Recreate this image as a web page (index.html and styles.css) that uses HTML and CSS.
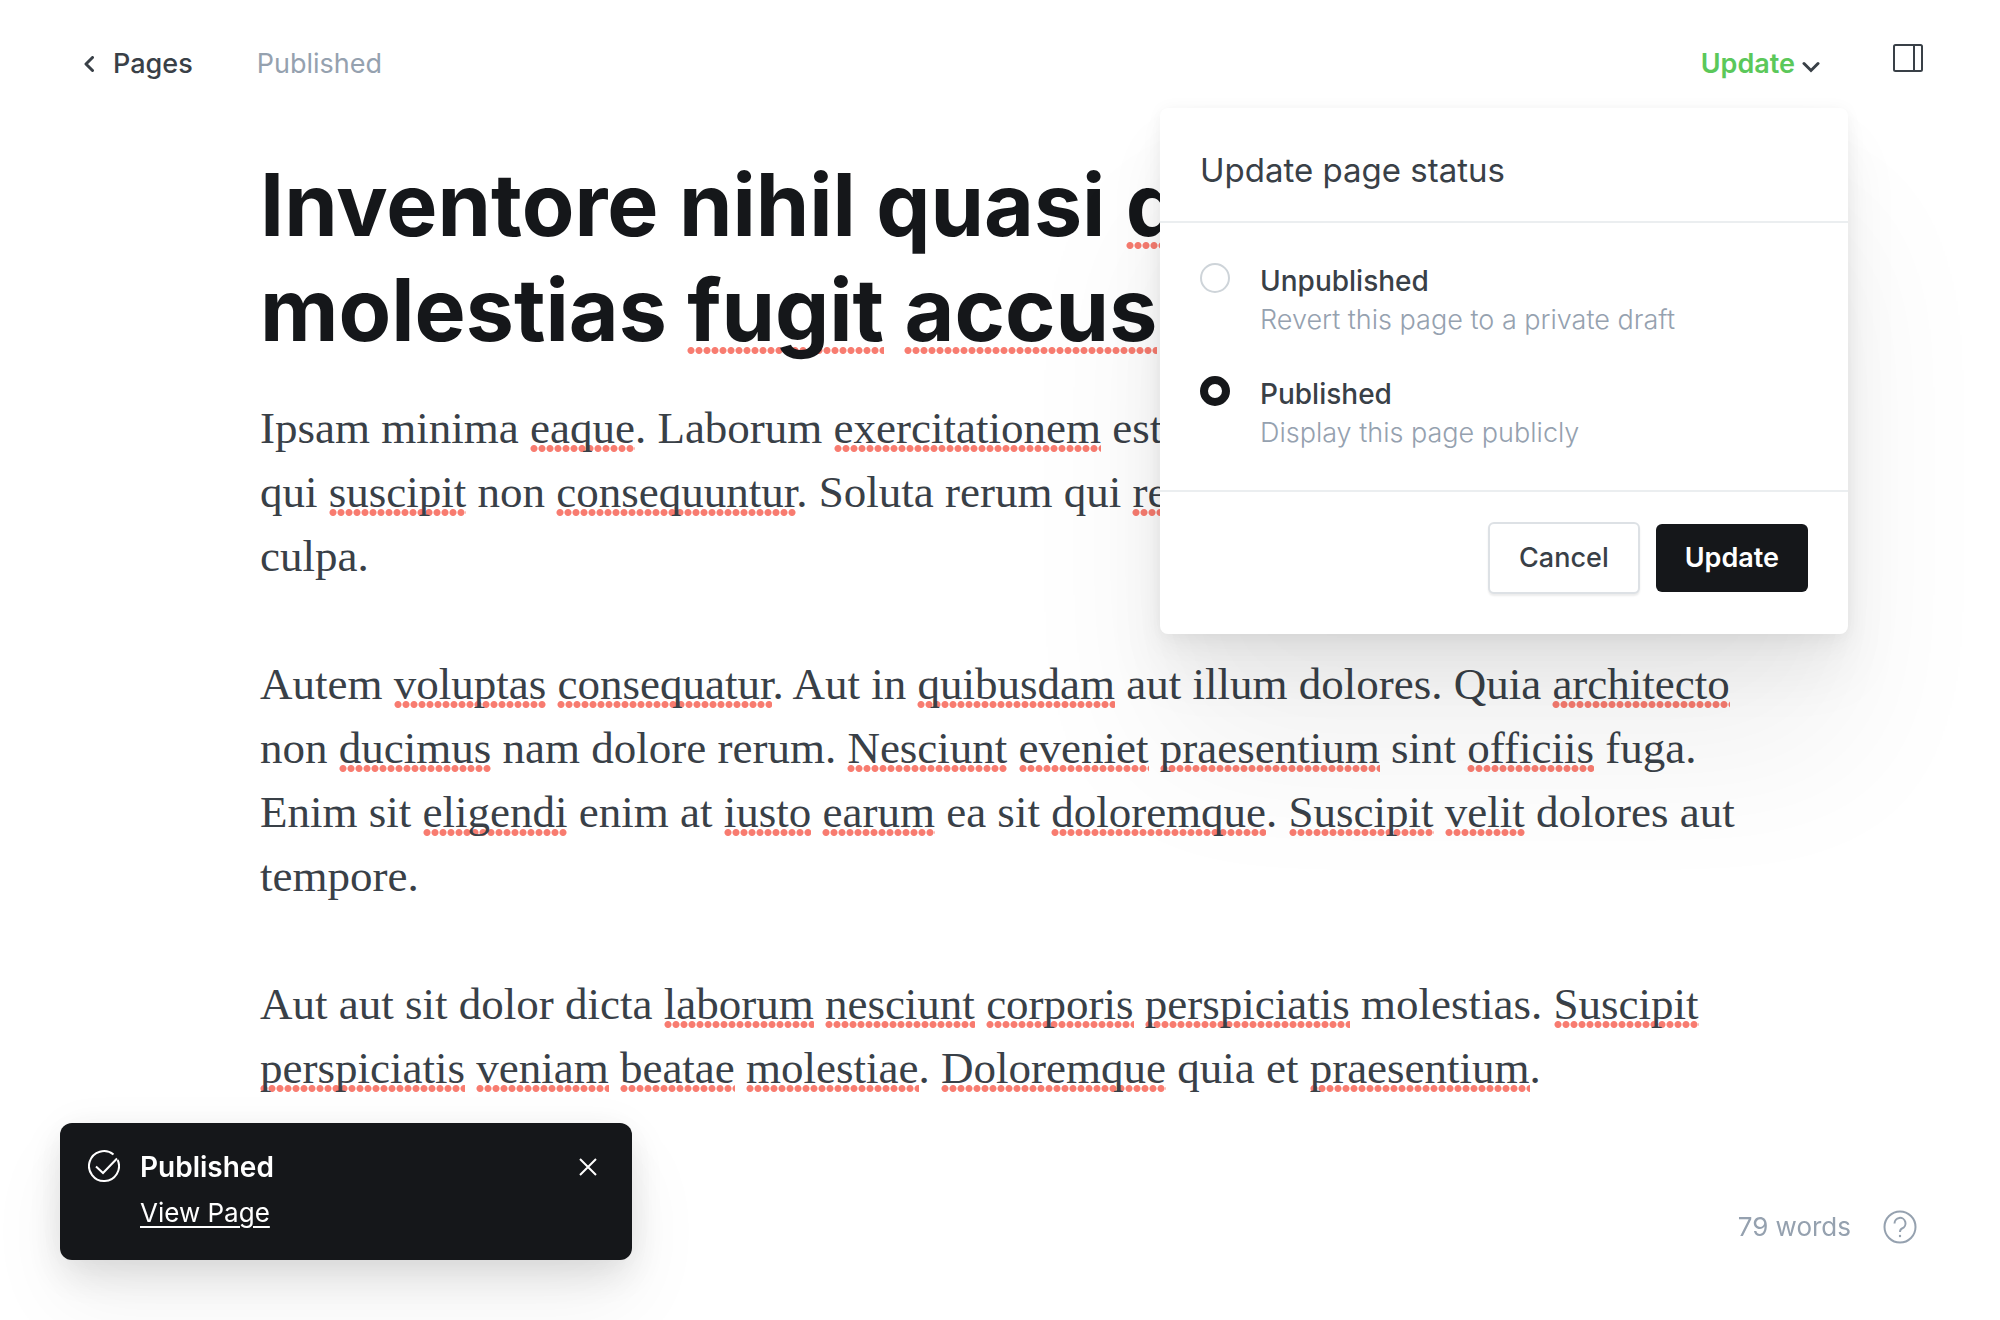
FILE: index.html
```html
<!DOCTYPE html>
<html lang="en">
<head>
<meta charset="utf-8">
<meta name="viewport" content="width=device-width, initial-scale=1">
<title>Edit page</title>
<link rel="stylesheet" href="styles.css">
</head>
<body>
<div class="editor">
  <header class="topbar">
    <nav class="topbar-side">
      <a class="back" href="#pages">
        <svg class="back-icon" width="10" height="16" viewBox="0 0 10 16" aria-hidden="true"><path d="M8.500 1.500L2 8l6.500 6.500"/></svg>
        Pages
      </a>
      <span class="status">Published</span>
    </nav>
    <div class="topbar-side actions">
      <div class="publish">
        <button class="publish-trigger" type="button" aria-expanded="true">
          Update
          <svg class="chevron" width="18" height="12" viewBox="0 0 18 12" aria-hidden="true"><path d="M2 2.500l7 7 7-7"/></svg>
        </button>
        <form class="popover">
          <h2 class="popover-title">Update page status</h2>
          <div class="options">
            <label class="option">
              <input class="radio" type="radio" name="status">
              <span class="option-text"><span class="option-name">Unpublished</span><span class="option-hint">Revert this page to a private draft</span></span>
            </label>
            <label class="option">
              <input class="radio" type="radio" name="status" checked>
              <span class="option-text"><span class="option-name">Published</span><span class="option-hint">Display this page publicly</span></span>
            </label>
          </div>
          <div class="popover-footer">
            <button class="btn btn-outline" type="button">Cancel</button>
            <button class="btn btn-dark" type="button">Update</button>
          </div>
        </form>
      </div>
      <button class="icon-button sidebar-toggle" type="button" aria-label="Settings">
        <svg width="32" height="30" viewBox="0 0 32 30" aria-hidden="true"><rect x="2" y="2" width="28" height="26" rx="1.500"/><path d="M22 2v26"/></svg>
      </button>
    </div>
  </header>

  <main class="content">
    <h1 class="title">Inventore nihil quasi <span class="sp">d</span><br>molestias <span class="sp">fugit</span> <span class="sp">accus</span></h1>
    <p>Ipsam minima <span class="sp">eaque</span>. Laborum <span class="sp">exercitationem</span> est<br>
    qui <span class="sp">suscipit</span> non <span class="sp">consequuntur</span>. Soluta rerum qui <span class="sp">re</span><br>
    culpa.</p>
    <p>Autem <span class="sp">voluptas</span> <span class="sp">consequatur</span>. Aut in <span class="sp">quibusdam</span> aut illum dolores. Quia <span class="sp">architecto</span><br>
    non <span class="sp">ducimus</span> nam dolore rerum. <span class="sp">Nesciunt</span> <span class="sp">eveniet</span> <span class="sp">praesentium</span> sint <span class="sp">officiis</span> fuga.<br>
    Enim sit <span class="sp">eligendi</span> enim at <span class="sp">iusto</span> <span class="sp">earum</span> ea sit <span class="sp">doloremque</span>. <span class="sp">Suscipit</span> <span class="sp">velit</span> dolores aut<br>
    tempore.</p>
    <p>Aut aut sit dolor dicta <span class="sp">laborum</span> <span class="sp">nesciunt</span> <span class="sp">corporis</span> <span class="sp">perspiciatis</span> molestias. <span class="sp">Suscipit</span><br>
    <span class="sp">perspiciatis</span> <span class="sp">veniam</span> <span class="sp">beatae</span> <span class="sp">molestiae</span>. <span class="sp">Doloremque</span> quia et <span class="sp">praesentium</span>.</p>
  </main>

  <aside class="toast" role="status">
    <svg class="toast-icon" width="32" height="38" viewBox="0 0 32 38" aria-hidden="true"><path d="M25.500 7.500A15 15 0 1 0 29.700 13"/><path d="M8 19.500l7 6.500L29 11.500"/></svg>
    <div class="toast-text">
      <strong class="toast-title">Published</strong>
      <a class="toast-link" href="#view">View Page</a>
    </div>
    <button class="icon-button toast-close" type="button" aria-label="Close">
      <svg width="18" height="18" viewBox="0 0 18 18" aria-hidden="true"><path d="M1 1l16 16M17 1L1 17"/></svg>
    </button>
  </aside>

  <footer class="wordcount">
    <span>79 words</span>
    <a class="help" href="#help" aria-label="Help">
      <svg width="34" height="34" viewBox="0 0 34 34" aria-hidden="true"><circle cx="17" cy="17" r="15.500"/><path d="M11.500 13.500a5.500 5.500 0 1 1 7.500 5c-1.500.6-2 1.500-2 3.500"/><circle class="dot" cx="17" cy="26" r="1.200"/></svg>
    </a>
  </footer>
</div>
</body>
</html>
```

FILE: styles.css
```css
* { box-sizing: border-box; }

body {
  margin: 0;
  background: #fff;
  color: #394047;
  font-family: Inter, "Liberation Sans", sans-serif;
  font-size: 27px;
  line-height: 32px;
}

button, input { font: inherit; color: inherit; margin: 0; }
button { cursor: pointer; }
svg { display: block; fill: none; stroke: currentColor; stroke-width: 2; }

.editor { min-height: 100vh; overflow: hidden; }

.topbar {
  display: flex;
  justify-content: space-between;
  padding: 40px 76px 0 84px;
  height: 108px;
}
.topbar-side { display: flex; align-items: flex-start; gap: 64px; padding-top: 8px; }
.actions { gap: 72px; padding-top: 0; }
.back {
  display: flex;
  align-items: center;
  gap: 19px;
  color: inherit;
  font-weight: 500;
  text-decoration: none;
}
.back-icon { stroke-width: 3; stroke-linecap: round; stroke-linejoin: round; }
.status { color: #95a1af; }

.publish { position: relative; padding-top: 8px; }
.publish-trigger {
  display: flex;
  align-items: center;
  gap: 7px;
  padding: 0;
  border: 0;
  background: none;
  color: #5bc85a;
  font-weight: 600;
}
.chevron { color: #394047; stroke-width: 3; stroke-linecap: round; margin-top: 6px; }
.icon-button { padding: 0; border: 0; background: none; }
.sidebar-toggle { padding-top: 3px; }

.popover {
  position: absolute;
  z-index: 2;
  top: 68px;
  right: -28px;
  width: 688px;
  border-radius: 8px;
  background: #fff;
  box-shadow: 0 0 16px rgba(0, 0, 0, .04), 0 12px 24px rgba(0, 0, 0, .04), 0 40px 60px rgba(0, 0, 0, .06), 0 120px 160px rgba(0, 0, 0, .06);
}
.popover-title {
  margin: 0;
  padding: 42px 40px 31px;
  border-bottom: 2px solid #ebeef0;
  font-size: 33px;
  line-height: 40px;
  font-weight: 400;
}
.options {
  display: flex;
  flex-direction: column;
  gap: 38px;
  padding: 38px 40px 41px;
  border-bottom: 2px solid #ebeef0;
}
.option { display: flex; gap: 30px; }
.radio {
  appearance: none;
  flex: none;
  width: 30px;
  height: 30px;
  margin-top: 2px;
  border: 2px solid #ced4d9;
  border-radius: 50%;
  background: #fff;
}
.radio:checked { border: 8px solid #15171a; }
.option-text { display: flex; flex-direction: column; gap: 7px; }
.option-name { padding-top: 4px; font-size: 28px; font-weight: 500; }
.option-hint { color: #95a1af; font-weight: 300; }
.popover-footer { display: flex; justify-content: flex-end; gap: 16px; padding: 31px 40px 41px; }
.btn {
  height: 68px;
  margin: 1px 0;
  padding: 0 29px;
  border: 0;
  border-radius: 6px;
  font-weight: 500;
}
.btn-outline {
  height: 72px;
  margin: -1px 0;
  border: 2px solid #dde1e5;
  background: #fff;
  box-shadow: 0 2px 2px rgba(0, 0, 0, .08);
}
.btn-dark { background: #15171a; color: #fff; font-weight: 600; }

.content {
  max-width: 1480px;
  margin: 0 auto;
  padding-top: 45px;
  font-family: "Liberation Serif", serif;
  font-size: 45px;
  line-height: 64px;
  white-space: nowrap;
}
.content p { margin: 0 0 64px; }
.title {
  margin: 0 0 33px;
  color: #15171a;
  font-family: Inter, "Liberation Sans", sans-serif;
  font-size: 86px;
  line-height: 105px;
  font-weight: 700;
}

/* Spell-check dots under unknown words */
.sp { background: radial-gradient(circle, #f87c70 2px, #f87c70 3px, transparent 4px) 0 calc(100% - 1px) / 8px 7px repeat-x; }
.title .sp { background-position: 0 calc(100% - 8px); }

.toast {
  position: fixed;
  left: 60px;
  bottom: 60px;
  width: 572px;
  display: flex;
  align-items: flex-start;
  padding: 24px 35px 27px 28px;
  border-radius: 12px;
  background: #15171a;
  color: #fff;
  box-shadow: 0 0 40px rgba(0, 0, 0, .04), 0 16px 40px rgba(0, 0, 0, .1), 0 40px 80px rgba(0, 0, 0, .06);
}
.toast-text { flex: 1; display: flex; flex-direction: column; align-items: flex-start; gap: 14px; padding: 4px 0 4px 20px; }
.toast-title { font-size: 28px; font-weight: 600; }
.toast-link { color: inherit; font-size: 26px; text-underline-offset: 4px; text-decoration-thickness: 2px; }
.toast-close { padding-top: 11px; }

.wordcount {
  position: fixed;
  right: 83px;
  bottom: 76px;
  display: flex;
  align-items: center;
  gap: 32px;
  color: #95a1af;
  font-size: 26px;
}
.help { color: inherit; }
.dot { fill: currentColor; stroke: none; }
```
